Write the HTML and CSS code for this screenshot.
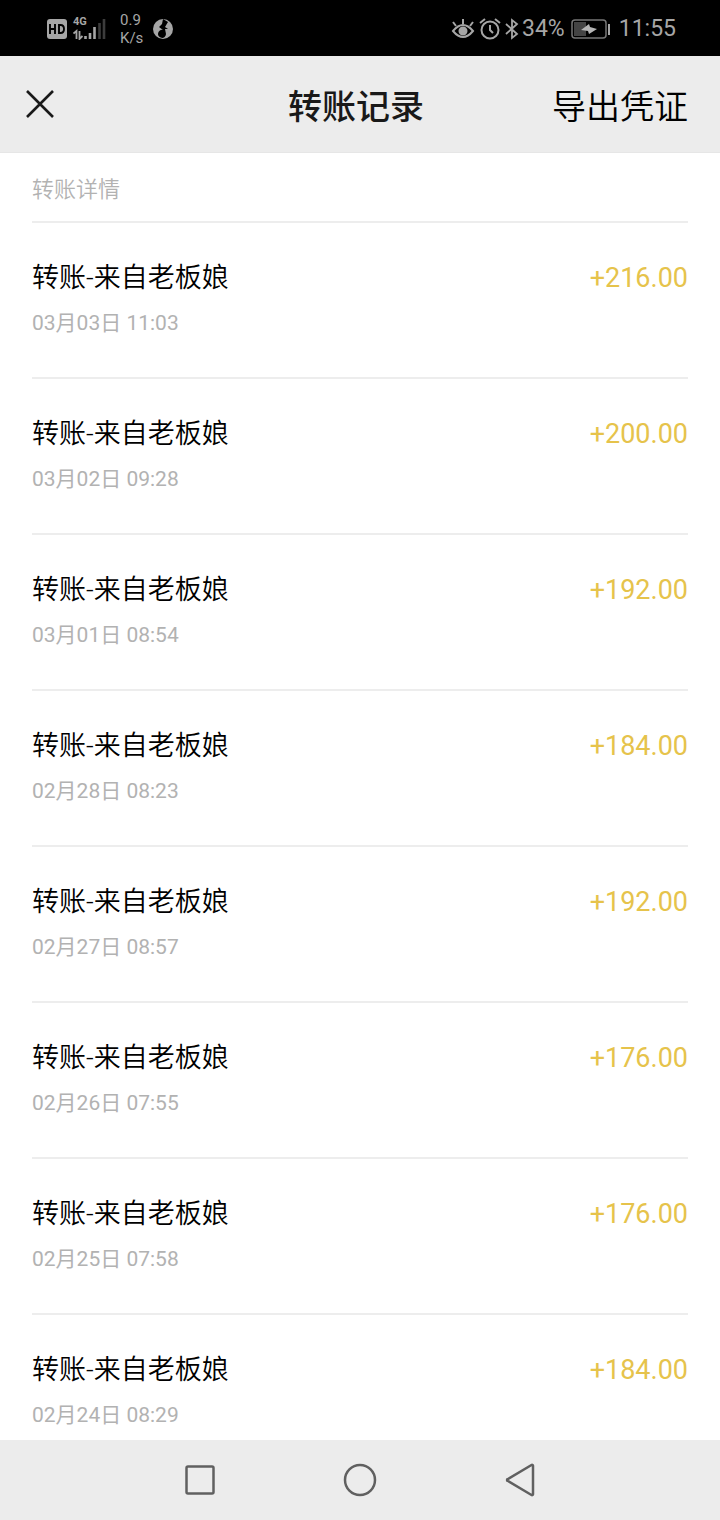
FILE: index.html
```html
<!DOCTYPE html>
<html lang="zh-CN">
<head>
    <meta charset="UTF-8">
    <meta name="viewport" content="width=device-width, initial-scale=1.0">
    <title>转账记录</title>
    <link rel="stylesheet" href="styles.css">
</head>
<body>
    <div class="status-bar">
        <div class="status-left">
            <svg class="icon-hd" width="20" height="20" viewBox="0 0 20 20">
                <rect x="0" y="0" width="20" height="20" rx="3" fill="#a6a6a6"/>
                <path d="M3 5v10M8 5v10M3 10h5M12 6v8h1.500q3.500 0 3.500-4t-3.500-4z" fill="none" stroke="#000" stroke-width="1.900"/>
            </svg>
            <div class="signal">
                <span class="network">4G</span>
                <svg width="33" height="22" viewBox="0 0 33 22">
                    <path d="M3.500 21v-8L0.500 15.500M6.500 13v8l3-3" fill="none" stroke="#a6a6a6" stroke-width="1.800"/>
                    <path d="M12.500 21v-3M17 21v-6M21.500 21V9" stroke="#a6a6a6" stroke-width="2.600"/>
                    <path d="M26.500 21V5M31 21V1" stroke="#3c3c3c" stroke-width="2.600"/>
                </svg>
            </div>
            <div class="speed"><span>0.9</span><span>K/s</span></div>
            <svg class="icon-music" width="20" height="20" viewBox="0 0 20 20">
                <circle cx="10" cy="10" r="10" fill="#a6a6a6"/>
                <path d="M10 0l5 3-3 5 3 2-3 0 1 5a4 4 0 1 1-3-4L6 8l3-3z" fill="#000"/>
            </svg>
        </div>
        <div class="status-right">
            <svg width="24" height="22" viewBox="0 0 24 22" fill="none" stroke="#a6a6a6" stroke-width="2">
                <path d="M2 13Q12 1 22 13Q12 25 2 13z"/>
                <circle cx="12" cy="13" r="3.500" fill="#a6a6a6"/>
                <path d="M12 1v5M2 4l3 4M22 4l-3 4"/>
            </svg>
            <svg class="icon-alarm" width="22" height="22" viewBox="0 0 22 22" fill="none" stroke="#a6a6a6" stroke-width="2">
                <circle cx="11" cy="12" r="8.500"/>
                <path d="M11 7v5l3 3M1 5l5-4M21 5l-5-4"/>
            </svg>
            <svg class="icon-bluetooth" width="14" height="22" viewBox="0 0 14 22" fill="none" stroke="#a6a6a6" stroke-width="1.800">
                <path d="M1 6l11 10-5 4V2l5 4L1 16"/>
            </svg>
            <span>34%</span>
            <svg class="icon-battery" width="40" height="20" viewBox="0 0 40 20">
                <rect x="1" y="1" width="34" height="18" rx="3" fill="none" stroke="#777" stroke-width="1.500"/>
                <rect x="3" y="3" width="12" height="14" fill="#444"/>
                <path d="M10 11l8-6 1 3 7 2-8 5-1-3z" fill="#b5b5b5"/>
                <rect x="37" y="5" width="2" height="11" fill="#a6a6a6"/>
            </svg>
            <span>11:55</span>
        </div>
    </div>

    <header class="header">
        <button class="close-btn" aria-label="关闭">
            <svg width="32" height="32" viewBox="0 0 32 32">
                <path d="M3 3l26 26M29 3L3 29" fill="none" stroke="#191919" stroke-width="2.600"/>
            </svg>
        </button>
        <h1>转账记录</h1>
        <button class="export-btn">导出凭证</button>
    </header>

    <main class="content">
        <h2>转账详情</h2>
        <ul class="record-list">
            <li class="record">
                <div class="info">
                    <p class="name">转账-来自老板娘</p>
                    <p class="time">03月03日 11:03</p>
                </div>
                <span class="amount">+216.00</span>
            </li>
            <li class="record">
                <div class="info">
                    <p class="name">转账-来自老板娘</p>
                    <p class="time">03月02日 09:28</p>
                </div>
                <span class="amount">+200.00</span>
            </li>
            <li class="record">
                <div class="info">
                    <p class="name">转账-来自老板娘</p>
                    <p class="time">03月01日 08:54</p>
                </div>
                <span class="amount">+192.00</span>
            </li>
            <li class="record">
                <div class="info">
                    <p class="name">转账-来自老板娘</p>
                    <p class="time">02月28日 08:23</p>
                </div>
                <span class="amount">+184.00</span>
            </li>
            <li class="record">
                <div class="info">
                    <p class="name">转账-来自老板娘</p>
                    <p class="time">02月27日 08:57</p>
                </div>
                <span class="amount">+192.00</span>
            </li>
            <li class="record">
                <div class="info">
                    <p class="name">转账-来自老板娘</p>
                    <p class="time">02月26日 07:55</p>
                </div>
                <span class="amount">+176.00</span>
            </li>
            <li class="record">
                <div class="info">
                    <p class="name">转账-来自老板娘</p>
                    <p class="time">02月25日 07:58</p>
                </div>
                <span class="amount">+176.00</span>
            </li>
            <li class="record">
                <div class="info">
                    <p class="name">转账-来自老板娘</p>
                    <p class="time">02月24日 08:29</p>
                </div>
                <span class="amount">+184.00</span>
            </li>
        </ul>
    </main>

    <nav class="nav-bar">
        <button aria-label="最近任务">
            <svg width="36" height="36" viewBox="0 0 36 36"><rect x="4.500" y="4.500" width="27" height="27" rx="1.500"/></svg>
        </button>
        <button aria-label="主屏幕">
            <svg width="36" height="36" viewBox="0 0 36 36"><circle cx="18" cy="18" r="15"/></svg>
        </button>
        <button aria-label="返回">
            <svg width="36" height="36" viewBox="0 0 36 36"><path d="M31 4v28a1 1 0 0 1-1.500 1L6 19a1 1 0 0 1 0-2L29.500 3a1 1 0 0 1 1.500 1z"/></svg>
        </button>
    </nav>
</body>
</html>
```

FILE: styles.css
```css
* {
    box-sizing: border-box;
    margin: 0;
    padding: 0;
}

body {
    font-family: Roboto, "Noto Sans CJK SC", sans-serif;
    background-color: #ffffff;
    color: #000000;
    height: 100vh;
    display: flex;
    flex-direction: column;
}

button {
    border: none;
    background: none;
    font-family: inherit;
    color: inherit;
    cursor: pointer;
}

svg {
    display: block;
}

/* Status bar */
.status-bar {
    height: 56px;
    flex-shrink: 0;
    padding: 2px 44px 0 47px;
    display: flex;
    justify-content: space-between;
    align-items: center;
    background-color: #000000;
    color: #a6a6a6;
}

.status-left, .status-right {
    display: flex;
    align-items: center;
}

.status-right {
    font-size: 23px;
    line-height: 30px;
}

.signal {
    position: relative;
    margin: 0 14px 0 6px;
}

.network {
    position: absolute;
    left: 0;
    top: -2px;
    font-size: 11px;
    line-height: 12px;
    font-weight: bold;
}

.speed {
    display: flex;
    flex-direction: column;
    font-size: 15px;
    line-height: 18px;
    margin-right: 10px;
}

.icon-alarm {
    margin: 0 4px;
}

.icon-bluetooth {
    margin-right: 3px;
}

.icon-battery {
    margin: 0 8px 0 6px;
}

/* Title bar */
.header {
    flex-shrink: 0;
    height: 97px;
    padding: 0 32px 0 24px;
    display: grid;
    grid-template-columns: 1fr auto 1fr;
    align-items: center;
    background-color: #ececec;
    border-bottom: 1px solid #e6e6e6;
}

.header h1, .export-btn {
    padding-top: 6px;
    font-size: 34px;
    line-height: 48px;
}

.header h1 {
    font-weight: 500;
    color: #191919;
}

.close-btn {
    justify-self: start;
}

.export-btn {
    justify-self: end;
    font-weight: 350;
}

/* Records */
.content {
    flex: 1;
    min-height: 0;
    overflow: hidden;
    padding: 0 32px;
}

.content h2 {
    padding: 21px 0 15px;
    font-size: 22px;
    line-height: 32px;
    font-weight: 350;
    color: #b2b2b2;
    border-bottom: 2px solid #ededed;
}

.record-list {
    list-style: none;
}

.record {
    display: flex;
    justify-content: space-between;
    align-items: flex-start;
    padding: 37px 0 40px;
    border-bottom: 2px solid #ededed;
}

.name, .amount {
    font-size: 27px;
    line-height: 36px;
}

.name {
    font-weight: 350;
}

.time {
    margin-top: 13px;
    font-size: 21px;
    line-height: 28px;
    color: #b2b2b2;
}

.amount {
    color: #e6c34b;
}

/* Bottom navigation */
.nav-bar {
    flex-shrink: 0;
    height: 80px;
    display: flex;
    justify-content: center;
    align-items: center;
    gap: 124px;
    background-color: #ececec;
}

.nav-bar svg {
    fill: none;
    stroke: #606060;
    stroke-width: 2.5px;
}
```
